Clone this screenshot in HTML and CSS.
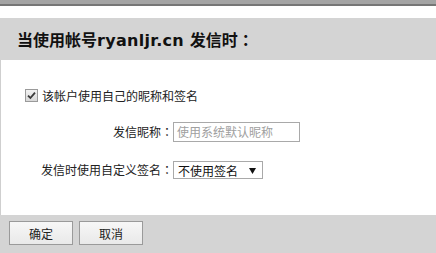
FILE: index.html
```html
<!DOCTYPE html>
<html lang="zh-CN">
<head>
<meta charset="utf-8">
<title>发信设置</title>
<link rel="stylesheet" href="styles.css">
</head>
<body>
<div class="topbar"></div>
<div class="dialog">
  <div class="header"><h1 class="title">当使用帐号<span class="account">ryanljr.cn</span> 发信时<span class="colon" lang="ja">：</span></h1></div>
  <div class="content">
    <label class="check-row">
      <span class="checkbox"><svg width="9" height="9" viewBox="0 0 9 9"><path d="M1 4.6 L3.4 7 L8 1.6" fill="none" stroke="#3a3a3a" stroke-width="1.8"/></svg></span>
      <span>该帐户使用自己的昵称和签名</span>
    </label>
    <div class="form">
      <div class="label">发信昵称<span class="colon" lang="ja">：</span></div>
      <div class="field"><div class="input">使用系统默认昵称</div></div>
      <div class="label">发信时使用自定义签名<span class="colon" lang="ja">：</span></div>
      <div class="field"><div class="select"><span>不使用签名</span><svg class="arrow" width="7" height="7" viewBox="0 0 7 7"><path d="M0 1 L7 1 L3.5 7 Z" fill="#111"/></svg></div></div>
    </div>
  </div>
  <div class="footer">
    <button class="btn">确定</button>
    <button class="btn">取消</button>
  </div>
</div>
</body>
</html>
```

FILE: styles.css
```css
html, body {
  margin: 0;
  padding: 0;
  background: #fff;
}
body {
  width: 436px;
  height: 253px;
  overflow: hidden;
  font-family: "Noto Sans CJK SC", "DejaVu Sans", sans-serif;
  font-size: 12px;
  color: #222;
  text-spacing-trim: space-all;
}
.topbar {
  height: 4px;
  background: #a4a4a4;
  border-bottom: 2px solid #767676;
}
.dialog {
  margin-top: 12px;
}
.header {
  height: 42px;
  background: #d4d4d4;
  display: flex;
  align-items: center;
  padding-left: 17px;
}
.title {
  margin: 0;
  font-family: "DejaVu Sans", "Noto Sans CJK SC", sans-serif;
  font-size: 16px;
  font-weight: bold;
  color: #111;
}
.account {
  letter-spacing: 0.3px;
}
.colon {
  font-family: "Noto Sans CJK JP", sans-serif;
}
.content {
  height: 155px;
  box-sizing: border-box;
  border-left: 1px solid #cfcfcf;
  padding-top: 25px;
}
.check-row {
  display: flex;
  align-items: center;
  height: 20px;
  padding-left: 24px;
  gap: 4px;
}
.checkbox {
  width: 11px;
  height: 11px;
  border: 1px solid #9a9a9a;
  background: linear-gradient(#f2f2f2, #d8d8d8);
  display: flex;
  align-items: center;
  justify-content: center;
  box-sizing: content-box;
}
.form {
  display: grid;
  grid-template-columns: 172px auto;
  row-gap: 18px;
  margin-top: 17px;
}
.label {
  text-align: right;
  height: 20px;
  line-height: 20px;
  white-space: nowrap;
}
.field {
  height: 20px;
  display: flex;
  align-items: center;
}
.input {
  width: 122px;
  height: 18px;
  line-height: 18px;
  border: 1px solid #a9a9a9;
  color: #a0a0a0;
  padding-left: 3px;
  box-sizing: content-box;
  white-space: nowrap;
  overflow: hidden;
}
.select {
  display: flex;
  align-items: center;
  justify-content: space-between;
  padding: 0 6px 0 4px;
  box-sizing: border-box;
  width: 90px;
  height: 18px;
  border: 1px solid #a9a9a9;
  color: #111;
}
.footer {
  height: 38px;
  background: #d4d4d4;
  display: flex;
  gap: 6px;
  padding: 6px 0 0 9px;
  box-sizing: border-box;
  align-items: flex-start;
}
.btn {
  width: 64px;
  height: 24px;
  border: 1px solid #9a9a9a;
  background: linear-gradient(#f7f7f7, #e9e9e9);
  font-family: "Noto Sans CJK SC", sans-serif;
  font-size: 12px;
  color: #222;
  padding: 0;
  margin: 0;
}
```
